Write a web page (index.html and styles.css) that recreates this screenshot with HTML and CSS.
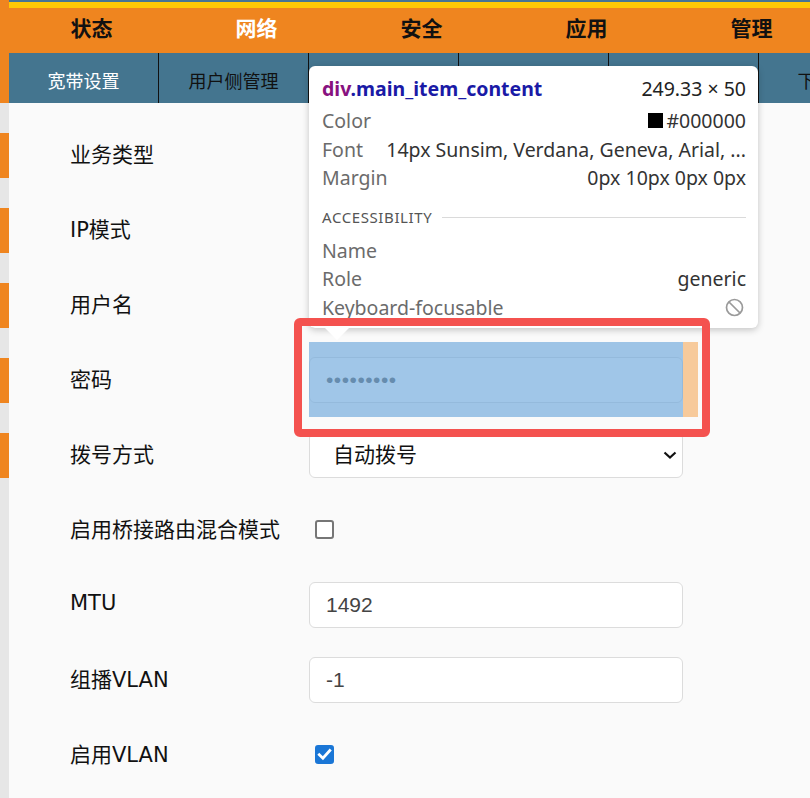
FILE: index.html
```html
<!DOCTYPE html>
<html lang="zh-CN">
<head>
<meta charset="utf-8">
<title>宽带设置</title>
<link rel="stylesheet" href="styles.css">
</head>
<body>
<div class="page">
  <aside class="side">
    <div class="side-top"></div>
    <div class="side-item"></div>
    <div class="side-item"></div>
    <div class="side-item"></div>
    <div class="side-item"></div>
    <div class="side-item"></div>
  </aside>
  <div class="main">
    <div class="topline"></div>
    <nav class="mainnav">
      <a class="mn">状态</a>
      <a class="mn active">网络</a>
      <a class="mn">安全</a>
      <a class="mn">应用</a>
      <a class="mn">管理</a>
    </nav>
    <nav class="subnav">
      <a class="sn active">宽带设置</a>
      <a class="sn">用户侧管理</a>
      <a class="sn">WLAN设置</a>
      <a class="sn">LAN设置</a>
      <a class="sn">路由设置</a>
      <a class="sn">下行设置</a>
    </nav>
    <form class="form">
      <div class="row">
        <div class="label">业务类型</div>
        <div class="content">
          <div class="select"><select class="ctl sel"><option>INTERNET</option></select><svg class="chev" width="14" height="8" viewBox="0 0 14 8"><path d="M1.5 1.5 L7 6.5 L12.5 1.5" fill="none" stroke="#111" stroke-width="2.2"/></svg></div>
        </div>
      </div>
      <div class="row">
        <div class="label">IP模式</div>
        <div class="content">
          <div class="select"><select class="ctl sel"><option>IPv4</option></select><svg class="chev" width="14" height="8" viewBox="0 0 14 8"><path d="M1.5 1.5 L7 6.5 L12.5 1.5" fill="none" stroke="#111" stroke-width="2.2"/></svg></div>
        </div>
      </div>
      <div class="row">
        <div class="label">用户名</div>
        <div class="content"><input class="ctl" type="text" value=""></div>
      </div>
      <div class="row">
        <div class="label">密码</div>
        <div class="content inspected"><input class="ctl pw" type="password" value="123456789"></div>
      </div>
      <div class="row">
        <div class="label">拨号方式</div>
        <div class="content">
          <div class="select"><select class="ctl sel"><option>自动拨号</option></select><svg class="chev" width="14" height="8" viewBox="0 0 14 8"><path d="M1.5 1.5 L7 6.5 L12.5 1.5" fill="none" stroke="#111" stroke-width="2.2"/></svg></div>
        </div>
      </div>
      <div class="row">
        <div class="label">启用桥接路由混合模式</div>
        <div class="content">
          <label class="cb"><input type="checkbox"></label>
        </div>
      </div>
      <div class="row">
        <div class="label">MTU</div>
        <div class="content"><input class="ctl" type="text" value="1492"></div>
      </div>
      <div class="row">
        <div class="label">组播VLAN</div>
        <div class="content"><input class="ctl" type="text" value="-1"></div>
      </div>
      <div class="row">
        <div class="label">启用VLAN</div>
        <div class="content">
          <label class="cb"><input type="checkbox" checked><svg class="tick" width="19" height="19" viewBox="0 0 19 19"><path d="M4.3 9.8 L7.9 13.2 L14.8 5.6" fill="none" stroke="#fff" stroke-width="2.8" stroke-linecap="square"/></svg></label>
        </div>
      </div>
    </form>
  </div>
</div>

<div class="tooltip">
  <div class="tt-title">
    <b class="tt-sel"><span class="tt-tag">div</span>.main_item_content</b>
    <span class="tt-dim">249.33 × 50</span>
  </div>
  <div class="tt-row first"><span class="tt-k">Color</span><span class="tt-v"><i class="swatch"></i>#000000</span></div>
  <div class="tt-row"><span class="tt-k">Font</span><span class="tt-v">14px Sunsim, Verdana, Geneva, Arial, ...</span></div>
  <div class="tt-row"><span class="tt-k">Margin</span><span class="tt-v">0px 10px 0px 0px</span></div>
  <div class="tt-sec"><span>ACCESSIBILITY</span><i class="tt-line"></i></div>
  <div class="tt-row"><span class="tt-k">Name</span><span class="tt-v"></span></div>
  <div class="tt-row"><span class="tt-k">Role</span><span class="tt-v">generic</span></div>
  <div class="tt-row"><span class="tt-k">Keyboard-focusable</span><svg class="no" width="19" height="19" viewBox="0 0 19 19"><circle cx="9.5" cy="9.5" r="8" fill="none" stroke="#9a9a9a" stroke-width="1.7"/><path d="M4 4 L15 15" stroke="#9a9a9a" stroke-width="1.7"/></svg></div>
</div>

<div class="annot"></div>
</body>
</html>
```

FILE: styles.css
```css
html, body {
  margin: 0;
  padding: 0;
}
body {
  width: 810px;
  height: 798px;
  overflow: hidden;
  position: relative;
  background: #fafafa;
  font-family: "DejaVu Sans", "Noto Sans CJK SC", sans-serif;
  color: #111;
}
.page {
  display: flex;
  width: 810px;
  min-height: 798px;
  overflow: hidden;
}
.side {
  width: 9px;
  flex: none;
  background: #e6e6e6;
  display: flex;
  flex-direction: column;
}
.side-top {
  height: 103px;
  background: #ef851f;
}
.side-item {
  height: 45px;
  margin-top: 30px;
  background: #ef851f;
}
.main {
  flex: 1;
  min-width: 0;
  overflow: hidden;
}
.topline {
  height: 2px;
  background: #467594;
  border-bottom: 6px solid #ffc905;
}
.mainnav {
  display: flex;
  height: 45px;
  background: #ef851f;
}
.mn {
  width: 165px;
  flex: none;
  display: flex;
  align-items: center;
  justify-content: center;
  box-sizing: border-box;
  padding-bottom: 8px;
  font-family: "Noto Sans CJK SC", sans-serif;
  font-weight: bold;
  font-size: 21px;
  color: #111;
}
.mn.active {
  color: #fff;
}
.subnav {
  display: flex;
  height: 50px;
  background: #44758f;
}
.sn {
  width: 150px;
  flex: none;
  box-sizing: border-box;
  border-right: 1px solid #111;
  display: flex;
  align-items: center;
  justify-content: center;
  padding-top: 3px;
  font-family: "Noto Sans CJK SC", sans-serif;
  font-size: 18px;
  color: #111;
}
.sn.active {
  color: #fff;
}
.form {
  margin: 0;
  padding-top: 14px;
}
.row {
  display: flex;
  align-items: center;
  height: 75px;
}
.label {
  width: 300px;
  flex: none;
  box-sizing: border-box;
  padding-left: 61px;
  padding-bottom: 3px;
  font-size: 21px;
  color: #111;
}
.content {
  width: 374px;
  flex: none;
  margin-right: 15px;
  height: 75px;
  display: flex;
  align-items: center;
}
.ctl {
  width: 100%;
  height: 46px;
  box-sizing: border-box;
  margin: 0;
  border: 1px solid #dcdcdc;
  border-radius: 6px;
  background: #fff;
  padding: 0 16px;
  font-family: "Liberation Sans", "Noto Sans CJK SC", sans-serif;
  font-size: 21px;
  color: #444;
  outline: none;
}
.pw {
  color: #555;
  letter-spacing: 0.5px;
}
.select {
  width: 100%;
  display: grid;
  align-items: center;
}
.select > * {
  grid-area: 1 / 1;
}
.sel {
  -webkit-appearance: none;
  appearance: none;
  padding-left: 23px;
  color: #111;
}
.chev {
  justify-self: end;
  margin-right: 6px;
  pointer-events: none;
}
.cb {
  display: grid;
  margin-left: 6px;
  width: 19px;
  height: 19px;
}
.cb > * {
  grid-area: 1 / 1;
}
.cb input {
  -webkit-appearance: none;
  appearance: none;
  margin: 0;
  width: 19px;
  height: 19px;
  box-sizing: border-box;
  border: 2px solid #767676;
  border-radius: 3px;
  background: #fff;
}
.cb input:checked {
  background: #1a76d6;
  border-color: #1a76d6;
}
.tick {
  pointer-events: none;
}
.inspected {
  position: relative;
}
.inspected::after {
  content: "";
  position: absolute;
  inset: 0;
  background: rgba(111, 168, 220, 0.66);
}
.inspected::before {
  content: "";
  position: absolute;
  top: 0;
  bottom: 0;
  left: 100%;
  width: 15px;
  background: rgba(246, 178, 107, 0.66);
}
.tooltip {
  position: absolute;
  left: 309px;
  top: 66px;
  width: 449px;
  height: 262px;
  box-sizing: border-box;
  padding: 7px 12px 0 13px;
  background: #fff;
  border-radius: 6px;
  box-shadow: 0 2px 7px rgba(0, 0, 0, 0.22);
  font-family: "Noto Sans", sans-serif;
  font-size: 19.5px;
  color: #333;
  z-index: 5;
}
.tooltip::after {
  content: "";
  position: absolute;
  left: 16px;
  top: 100%;
  border-left: 12px solid transparent;
  border-right: 12px solid transparent;
  border-top: 12px solid #fff;
}
.tt-title {
  display: flex;
  justify-content: space-between;
  align-items: center;
  height: 30px;
}
.tt-sel {
  font-weight: bold;
  font-size: 19.5px;
  color: #1a1aa6;
}
.tt-tag {
  color: #881280;
}
.tt-dim {
  font-size: 19.5px;
  color: #222;
}
.tt-row {
  display: flex;
  justify-content: space-between;
  align-items: center;
  height: 28.7px;
}
.tt-row.first {
  margin-top: 3px;
}
.tt-k {
  color: #6b6b6b;
}
.tt-v {
  color: #333;
  display: flex;
  align-items: center;
  white-space: nowrap;
}
.swatch {
  width: 15px;
  height: 15px;
  background: #000;
  margin-right: 3px;
}
.tt-sec {
  display: flex;
  align-items: center;
  height: 20px;
  margin-top: 15px;
  margin-bottom: 8.6px;
  font-size: 15px;
  letter-spacing: 0.6px;
  color: #555;
}
.tt-line {
  flex: 1;
  height: 1px;
  margin-left: 10px;
  background: #dadada;
}
.no {
  margin-right: 2px;
}
.annot {
  position: absolute;
  left: 294px;
  top: 318px;
  width: 416px;
  height: 119px;
  box-sizing: border-box;
  border: 8.5px solid #f4524f;
  border-radius: 6px;
  z-index: 6;
}
```
